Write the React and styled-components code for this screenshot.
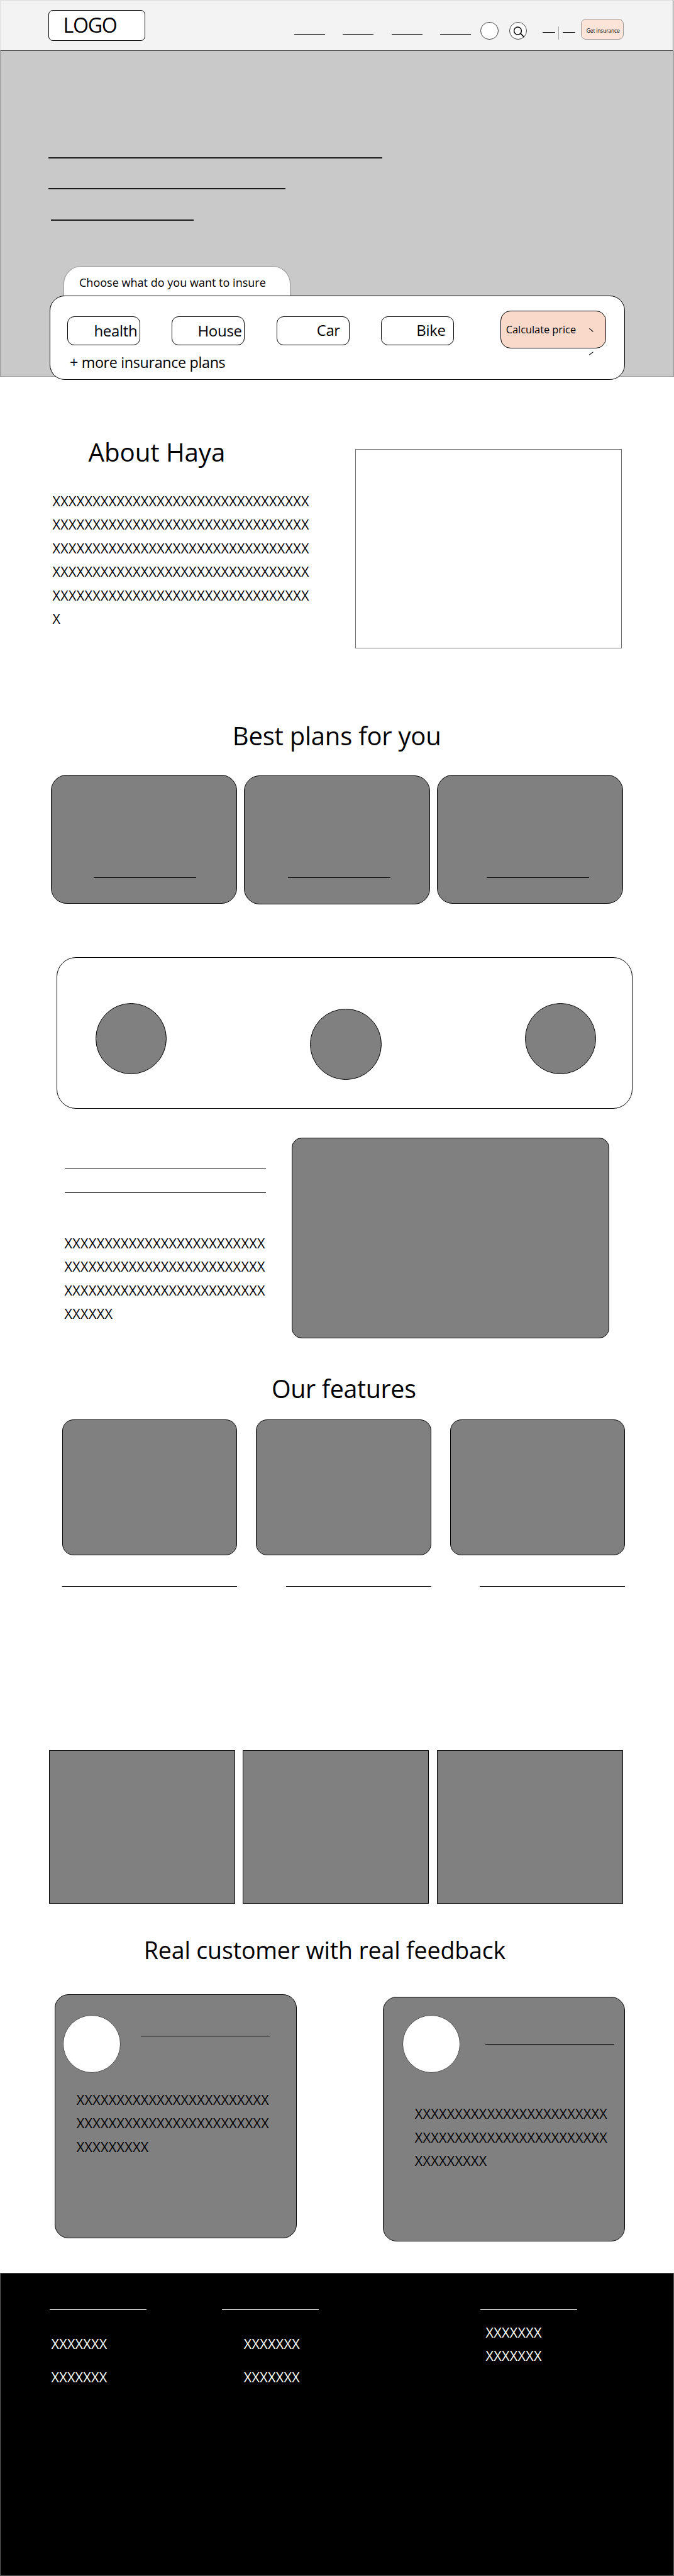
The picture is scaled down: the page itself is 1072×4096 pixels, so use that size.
import React from "react";
import styled, { createGlobalStyle } from "styled-components";

const GlobalStyle = createGlobalStyle`
  *, *::before, *::after { box-sizing: border-box; }
  html, body { margin: 0; padding: 0; background: #fff; }
  body {
    width: 1072px;
    overflow-x: hidden;
    color: #000;
    font-family: "Open Sans", "Noto Sans", sans-serif;
  }
`;

const Page = styled.main`
  width: 1072px;
  height: 4096px;
  overflow: hidden;
  background: #fff;
`;

/* Shared parts */

const Rule = styled.div`
  flex: none;
  width: ${(p) => p.$w}px;
  height: ${(p) => p.$h || 1}px;
  margin-top: ${(p) => p.$top || 0}px;
  margin-left: ${(p) => p.$left || 0}px;
  background: ${(p) => p.$color || "#000"};
`;

const Heading = styled.h2`
  margin: 0 0 0 ${(p) => p.$left}px;
  font-size: ${(p) => p.$size}px;
  font-weight: 400;
  line-height: 56px;
  letter-spacing: ${(p) => p.$ls}px;
  white-space: nowrap;
`;

const Copy = styled.div`
  margin-top: ${(p) => p.$top}px;
  margin-left: ${(p) => p.$left || 0}px;
  font-size: 21.6px;
  line-height: 37.43px;
  letter-spacing: 0.29px;
  white-space: nowrap;
`;

const Filler = ({ lines, ...rest }) => (
  <Copy {...rest}>
    {lines.map((count, i) => (
      <div key={i}>{"X".repeat(count)}</div>
    ))}
  </Copy>
);

const Tile = styled.div`
  flex: none;
  width: ${(p) => p.$w}px;
  height: ${(p) => p.$h}px;
  margin-top: ${(p) => p.$top || 0}px;
  border: 1px solid #000;
  border-radius: ${(p) => p.$r || 0}px;
  background: #808080;
`;

/* Header */

const Header = styled.header`
  display: flex;
  align-items: flex-start;
  width: 1071px;
  height: 81px;
  padding-left: 76px;
  border: 1px solid #e0e0e0;
  border-right-color: #333;
  border-bottom-color: #333;
  background: #f3f3f3;
`;

const Logo = styled.div`
  flex: none;
  width: 154px;
  height: 49px;
  margin-top: 15px;
  padding-left: 22.4px;
  border: 1px solid #000;
  border-radius: 7px;
  background: #fff;
  font-size: 32.2px;
  line-height: 45px;
  letter-spacing: -1.3px;
`;

const Nav = styled.nav`
  display: flex;
  gap: 28.8px;
  margin: 53px 0 0 237px;
`;

const RoundButton = styled.div`
  flex: none;
  width: 28.4px;
  height: 28.4px;
  margin-top: 33.6px;
  margin-left: ${(p) => p.$left}px;
  border: 1px solid #444;
  border-radius: 50%;
  background: #fff;

  svg { display: block; width: 26.4px; height: 26.4px; }
`;

const Switch = styled.div`
  display: flex;
  gap: 4.6px;
  margin: 40.9px 0 0 25px;
`;

const InsuranceButton = styled.div`
  flex: none;
  width: 68px;
  height: 33px;
  margin: 29.1px 0 0 9.1px;
  padding-left: 7.9px;
  border: 1px solid #9c9896;
  border-radius: 8px;
  background: #fce4d8;
  font-size: 8.4px;
  line-height: 35px;
  letter-spacing: -0.12px;
  white-space: nowrap;
`;

/* Hero */

const Hero = styled.section`
  height: 518px;
  padding-top: 169px;
  border: 1px solid #979797;
  border-top: 0;
  background: #c9c9c9;
`;

const Tab = styled.div`
  width: 361.3px;
  height: 48px;
  margin: 72.4px 0 0 99.8px;
  padding-left: 24.2px;
  border: 1px solid #979797;
  border-bottom: 0;
  border-radius: 28px 28px 0 0;
  background: #fff;
  font-size: 18px;
  line-height: 51px;
  letter-spacing: 0.02px;
  white-space: nowrap;
`;

const QuotePanel = styled.div`
  width: 915px;
  height: 134.4px;
  margin: -1px 0 0 77.6px;
  padding-left: 27.7px;
  border: 1px solid #000;
  border-radius: 24px;
  background: #fff;
`;

const OptionRow = styled.div`
  display: flex;
  gap: 50.3px;
`;

const Option = styled.div`
  flex: none;
  width: 115.9px;
  height: 45.8px;
  margin-top: 31.9px;
  padding-left: ${(p) => p.$pad}px;
  border: 1px solid #000;
  border-radius: 11px;
  font-size: ${(p) => p.$size || 24}px;
  line-height: ${(p) => p.$lh || 43.8}px;
  letter-spacing: -0.3px;
  white-space: nowrap;
`;

const Calculate = styled.div`
  position: relative;
  flex: none;
  width: 168.4px;
  height: 59.7px;
  margin: 23px 0 0 23.5px;
  padding-left: 8.2px;
  border: 1px solid #000;
  border-radius: 16px;
  background: #f9d9ca;
  font-size: 16.4px;
  line-height: 58px;
  letter-spacing: -0.04px;
  white-space: nowrap;
`;

const Ticks = styled.svg`
  position: absolute;
  left: 140.2px;
  top: 26.7px;
  width: 8px;
  height: 44px;
`;

const MorePlans = styled.div`
  margin: 7.5px 0 0 3.7px;
  font-size: 23.3px;
  line-height: 30px;
  letter-spacing: -0.33px;
  white-space: nowrap;
`;

/* Body sections */

const Section = styled.section`
  height: ${(p) => p.$h}px;
  padding-top: ${(p) => p.$top}px;
`;

const Split = styled(Section)`
  display: flex;
  align-items: flex-start;
  padding-left: ${(p) => p.$left}px;
`;

const Column = styled.div`
  flex: none;
  width: ${(p) => p.$w}px;
  padding-top: ${(p) => p.$top || 0}px;
`;

const Frame = styled.div`
  flex: none;
  width: 424px;
  height: 317.5px;
  margin-top: 23.1px;
  border: 1px solid #707070;
`;

const Row = styled.div`
  display: flex;
  align-items: flex-start;
  gap: ${(p) => p.$gap || 0}px;
  margin-top: ${(p) => p.$top || 0}px;
  padding-left: ${(p) => p.$left || 0}px;
`;

const StatsPanel = styled.div`
  display: flex;
  align-items: flex-start;
  justify-content: space-between;
  width: 916.1px;
  height: 241.3px;
  margin-left: 89.6px;
  padding: 72.1px 56.4px 0 61.2px;
  border: 1px solid #000;
  border-radius: 31px;
`;

const Disc = styled.div`
  width: 113.5px;
  height: 113.5px;
  margin-top: ${(p) => p.$top || 0}px;
  border: 1px solid #000;
  border-radius: 50%;
  background: #808080;
`;

const Avatar = styled.div`
  flex: none;
  width: 92px;
  height: 92px;
  border: 1px solid #4a4a4a;
  border-radius: 50%;
  background: #fff;
`;

/* Footer */

const Footer = styled.footer`
  display: flex;
  align-items: flex-start;
  height: 482px;
  padding-top: 57px;
  border: 1px solid #5c5c5c;
  background: #000;
  color: #fff;
`;

const FooterColumn = styled.div`
  flex: none;
  width: 154.5px;
  margin-left: ${(p) => p.$left}px;
`;

const FooterLinks = styled.div`
  display: grid;
  gap: ${(p) => p.$gap}px;
  margin-top: ${(p) => p.$top}px;
  margin-left: ${(p) => p.$indent}px;
  font-size: 21.6px;
  line-height: 30px;
  letter-spacing: 0.27px;
`;

const options = [
  { name: "health", pad: 41.1 },
  { name: "House", pad: 40 },
  { name: "Car", pad: 63.1, size: 23.8 },
  { name: "Bike", pad: 55.5, lh: 41.2 },
];

const footerColumns = [
  { left: 78.3, indent: 2.1, top: 39.2, gap: 22.7 },
  { left: 119, indent: 34.9, top: 39.2, gap: 22.7 },
  { left: 256.4, indent: 8.9, top: 20.5, gap: 7.8 },
];

export default function App() {
  return (
    <>
      <GlobalStyle />
      <Page>
        <Header>
          <Logo>LOGO</Logo>
          <Nav>
            {[0, 1, 2, 3].map((i) => (
              <Rule key={i} $w={48.7} />
            ))}
          </Nav>
          <RoundButton $left={15.1} />
          <RoundButton $left={17.3}>
            <svg viewBox="0 0 26.4 26.4" fill="none" stroke="#000">
              <circle cx="12.5" cy="13" r="5.9" strokeWidth="1.5" />
              <path d="M16.8 17.2 L22.6 23" strokeWidth="1.7" />
            </svg>
          </RoundButton>
          <Switch>
            <Rule $w={19.6} $top={9.6} />
            <Rule $w={1} $h={21.4} $color="#a9a9a9" />
            <Rule $w={19.6} $top={9.6} $left={2.2} />
          </Switch>
          <InsuranceButton>Get insurance</InsuranceButton>
        </Header>

        <Hero>
          <Rule $w={531} $h={2} $left={76} $color="#1a1a1a" />
          <Rule $w={377} $h={2} $left={76} $top={47.4} $color="#1a1a1a" />
          <Rule $w={227} $h={2} $left={80.4} $top={47.2} $color="#1a1a1a" />
          <Tab>Choose what do you want to insure</Tab>
          <QuotePanel>
            <OptionRow>
              {options.map((o) => (
                <Option key={o.name} $pad={o.pad} $size={o.size} $lh={o.lh}>
                  {o.name}
                </Option>
              ))}
              <Calculate>
                Calculate price
                <Ticks viewBox="0 0 8 44" fill="none" stroke="#000" strokeWidth="1.1">
                  <path d="M0.3 0.4 L6.4 5.2" />
                  <path d="M0.3 42.3 L6.4 37.6" />
                </Ticks>
              </Calculate>
            </OptionRow>
            <MorePlans>+ more insurance plans</MorePlans>
          </QuotePanel>
        </Hero>

        <Split $h={501} $top={91.5} $left={83.4}>
          <Column $w={482}>
            <Heading $left={57.2} $size={40.3} $ls={-0.1}>About Haya</Heading>
            <Filler $top={31.3} lines={[32, 32, 32, 32, 32, 1]} />
          </Column>
          <Frame />
        </Split>

        <Section $h={380} $top={42.2}>
          <Heading $left={369.8} $size={40} $ls={-0.22}>Best plans for you</Heading>
          <Row $top={34} $left={80.7} $gap={11.1}>
            {[68.3, 69.7, 78.6].map((left, i) => (
              <Tile key={left} $w={296.2} $h={204.5} $r={25} $top={i === 1 ? 1 : 0}>
                <Row>
                  <Rule $w={163} $left={left - 1} $top={i === 1 ? 161 : 162} />
                </Row>
              </Tile>
            ))}
          </Row>
        </Section>

        <Section $h={300} $top={41.6}>
          <StatsPanel>
            <Disc />
            <Disc $top={8.9} />
            <Disc />
          </StatsPanel>
        </Section>

        <Split $h={380} $top={29.4} $left={102.6}>
          <Column $w={361.6} $top={48.8}>
            <Rule $w={320.2} />
            <Rule $w={320.2} $top={36.9} />
            <Filler $top={60.9} lines={[25, 25, 25, 6]} />
          </Column>
          <Tile $w={505.3} $h={318.7} $r={16} />
        </Split>

        <Section $h={560} $top={19.8}>
          <Heading $left={431.9} $size={39.4} $ls={-0.32}>Our features</Heading>
          <Row $top={20.9} $left={99.1} $gap={30.05}>
            <Tile $w={278.3} $h={216} $r={18} />
            <Tile $w={278.3} $h={216} $r={18} />
            <Tile $w={278.3} $h={216} $r={18} />
          </Row>
          <Row $top={49.1} $left={99.1} $gap={77.2}>
            <Rule $w={278.3} />
            <Rule $w={231.1} />
            <Rule $w={231.1} />
          </Row>
        </Section>

        <Section $h={340} $top={62.8}>
          <Row $left={77.9} $gap={12.25}>
            <Tile $w={296.1} $h={244.6} />
            <Tile $w={296.1} $h={244.6} />
            <Tile $w={296.1} $h={244.6} />
          </Row>
        </Section>

        <Section $h={554} $top={13.1}>
          <Heading $left={228.8} $size={37.5} $ls={-0.15}>
            Real customer with real feedback
          </Heading>
          <Row $top={41.5} $left={86.8} $gap={136.6}>
            <Tile $w={385.2} $h={388.7} $r={22}>
              <Row $top={32.3} $left={12.7}>
                <Avatar />
                <Rule $w={205.1} $left={31.1} $top={33.1} />
              </Row>
              <Filler $top={23.8} $left={33.9} lines={[24, 24, 9]} />
            </Tile>
            <Tile $w={385.6} $h={388.7} $r={22} $top={4.8}>
              <Row $top={27.5} $left={30.4}>
                <Avatar />
                <Rule $w={205.1} $left={39.7} $top={46} />
              </Row>
              <Filler $top={46.6} $left={50.2} lines={[24, 24, 9]} />
            </Tile>
          </Row>
        </Section>

        <Footer>
          {footerColumns.map((c) => (
            <FooterColumn key={c.left} $left={c.left}>
              <Rule $w={154.2} $color="#fff" />
              <FooterLinks $top={c.top} $gap={c.gap} $indent={c.indent}>
                <div>XXXXXXX</div>
                <div>XXXXXXX</div>
              </FooterLinks>
            </FooterColumn>
          ))}
        </Footer>
      </Page>
    </>
  );
}
